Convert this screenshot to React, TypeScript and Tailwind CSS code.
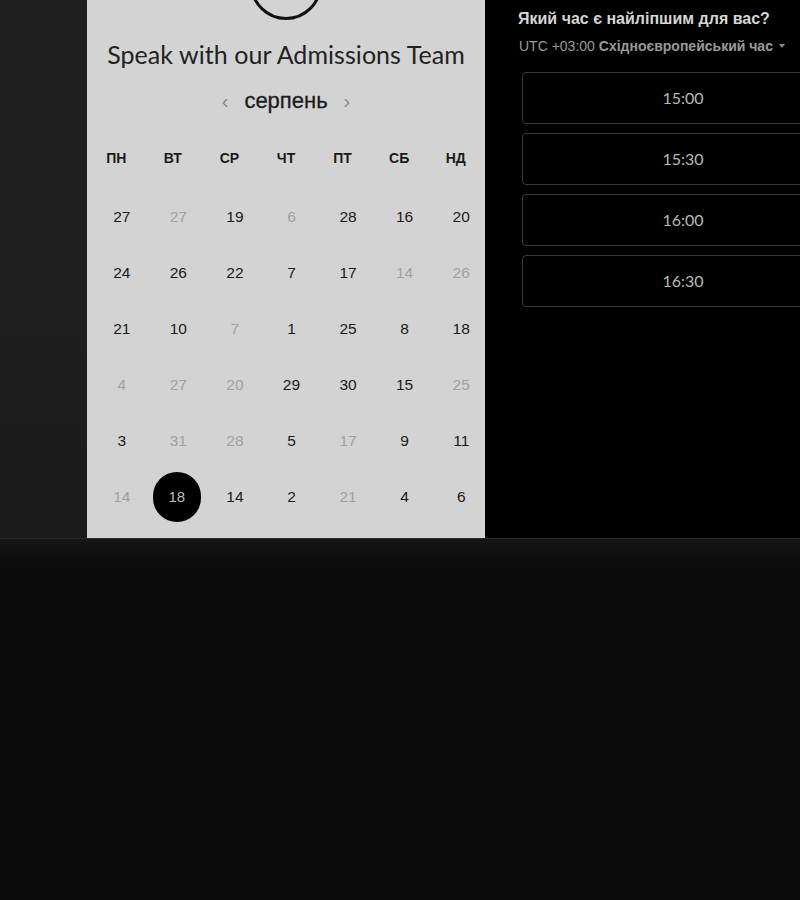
import React from "react";

type Cell = { n: number; f?: boolean; s?: boolean };

const rows: Cell[][] = [
  [{ n: 27 }, { n: 27, f: true }, { n: 19 }, { n: 6, f: true }, { n: 28 }, { n: 16 }, { n: 20 }],
  [{ n: 24 }, { n: 26 }, { n: 22 }, { n: 7 }, { n: 17 }, { n: 14, f: true }, { n: 26, f: true }],
  [{ n: 21 }, { n: 10 }, { n: 7, f: true }, { n: 1 }, { n: 25 }, { n: 8 }, { n: 18 }],
  [{ n: 4, f: true }, { n: 27, f: true }, { n: 20, f: true }, { n: 29 }, { n: 30 }, { n: 15 }, { n: 25, f: true }],
  [{ n: 3 }, { n: 31, f: true }, { n: 28, f: true }, { n: 5 }, { n: 17, f: true }, { n: 9 }, { n: 11 }],
  [{ n: 14, f: true }, { n: 18, s: true }, { n: 14 }, { n: 2 }, { n: 21, f: true }, { n: 4 }, { n: 6 }],
];

const days = ["ПН", "ВТ", "СР", "ЧТ", "ПТ", "СБ", "НД"];
const slots = ["15:00", "15:30", "16:00", "16:30"];

export default function App() {
  return (
    <div className="w-[800px] h-[900px] bg-[#0b0b0b] flex flex-col overflow-hidden" style={{ fontFamily: '"Liberation Sans", Arial, sans-serif' }}>
      <div className="h-[538px] flex shrink-0">
        <div className="w-[87px] bg-gradient-to-b from-[#1f1f1f] via-[#1f1f1f] to-[#1b1b1b]" />
        <div className="w-[398px] bg-[#d3d3d3] flex flex-col items-center overflow-hidden">
          <div className="w-[72px] h-[72px] mt-[-52px] rounded-full border-[3px] border-[#111]" />
          <div className="mt-[18px] h-[32px] leading-[32px] text-[25px] tracking-[0.05px] text-[#222] whitespace-nowrap" style={{ fontFamily: 'Lato, "Noto Sans", sans-serif' }}>
            Speak with our Admissions Team
          </div>
          <div className="mt-[17px] h-[28px] flex items-center gap-[16px]">
            <span className="text-[20px] text-[#8a8a8a] leading-none">‹</span>
            <span className="text-[22px] text-[#1c1c1c] leading-none" style={{ WebkitTextStroke: "0.3px #1c1c1c" }}>серпень</span>
            <span className="text-[20px] text-[#8a8a8a] leading-none">›</span>
          </div>
          <div className="mt-[15px] w-full px-[1px] grid grid-cols-7 h-[56px] items-center">
            {days.map((d) => (
              <div key={d} className="text-center text-[14px] font-bold text-[#1a1a1a]">{d}</div>
            ))}
          </div>
          <div className="mt-[3px] w-full px-[1px] flex flex-col">
            {rows.map((r, i) => (
              <div key={i} className="grid grid-cols-7 h-[56px] items-center">
                {r.map((c, j) => (
                  <div key={j} className={"flex items-center justify-center " + (c.s ? "pl-[8px]" : "pl-[11px]")}>
                    {c.s ? (
                      <div className="w-[50px] h-[50px] rounded-full bg-black flex items-center justify-center text-[15px] text-[#bdbdbd]">
                        {c.n}
                      </div>
                    ) : (
                      <span className={"text-[15.5px] " + (c.f ? "text-[#a0a0a0]" : "text-[#1a1a1a]")}>{c.n}</span>
                    )}
                  </div>
                ))}
              </div>
            ))}
          </div>
        </div>
        <div className="flex-1 bg-black overflow-hidden pl-[33px] pt-[9px]">
          <div className="text-[16px] font-bold text-[#d6d6d6] leading-[20px] whitespace-nowrap">Який час є найліпшим для вас?</div>
          <div className="mt-[8px] ml-[1px] text-[14px] leading-[18px] text-[#9a9a9a] whitespace-nowrap flex items-center">
            <span>UTC +03:00&nbsp;</span>
            <span className="font-bold">Східноєвропейський час</span>
            <span className="ml-[6px] inline-block w-0 h-0 border-l-[3.5px] border-r-[3.5px] border-t-[4px] border-l-transparent border-r-transparent border-t-[#8a8a8a]" />
          </div>
          <div className="mt-[17px] ml-[4px] flex flex-col gap-[9px]">
            {slots.map((s) => (
              <div key={s} className="w-[322px] h-[52px] shrink-0 rounded-[4px] border border-[#3a3a3a] flex items-center justify-center text-[16px] text-[#b8b8b8]" style={{ fontFamily: 'Lato, "Noto Sans", sans-serif' }}>
                {s}
              </div>
            ))}
          </div>
        </div>
      </div>
      <div className="flex-1 border-t border-[#2a2a2a] bg-[#0b0b0b] flex flex-col">
        <div className="h-[24px] bg-gradient-to-b from-[#161616] to-[#0b0b0b]" />
      </div>
    </div>
  );
}
